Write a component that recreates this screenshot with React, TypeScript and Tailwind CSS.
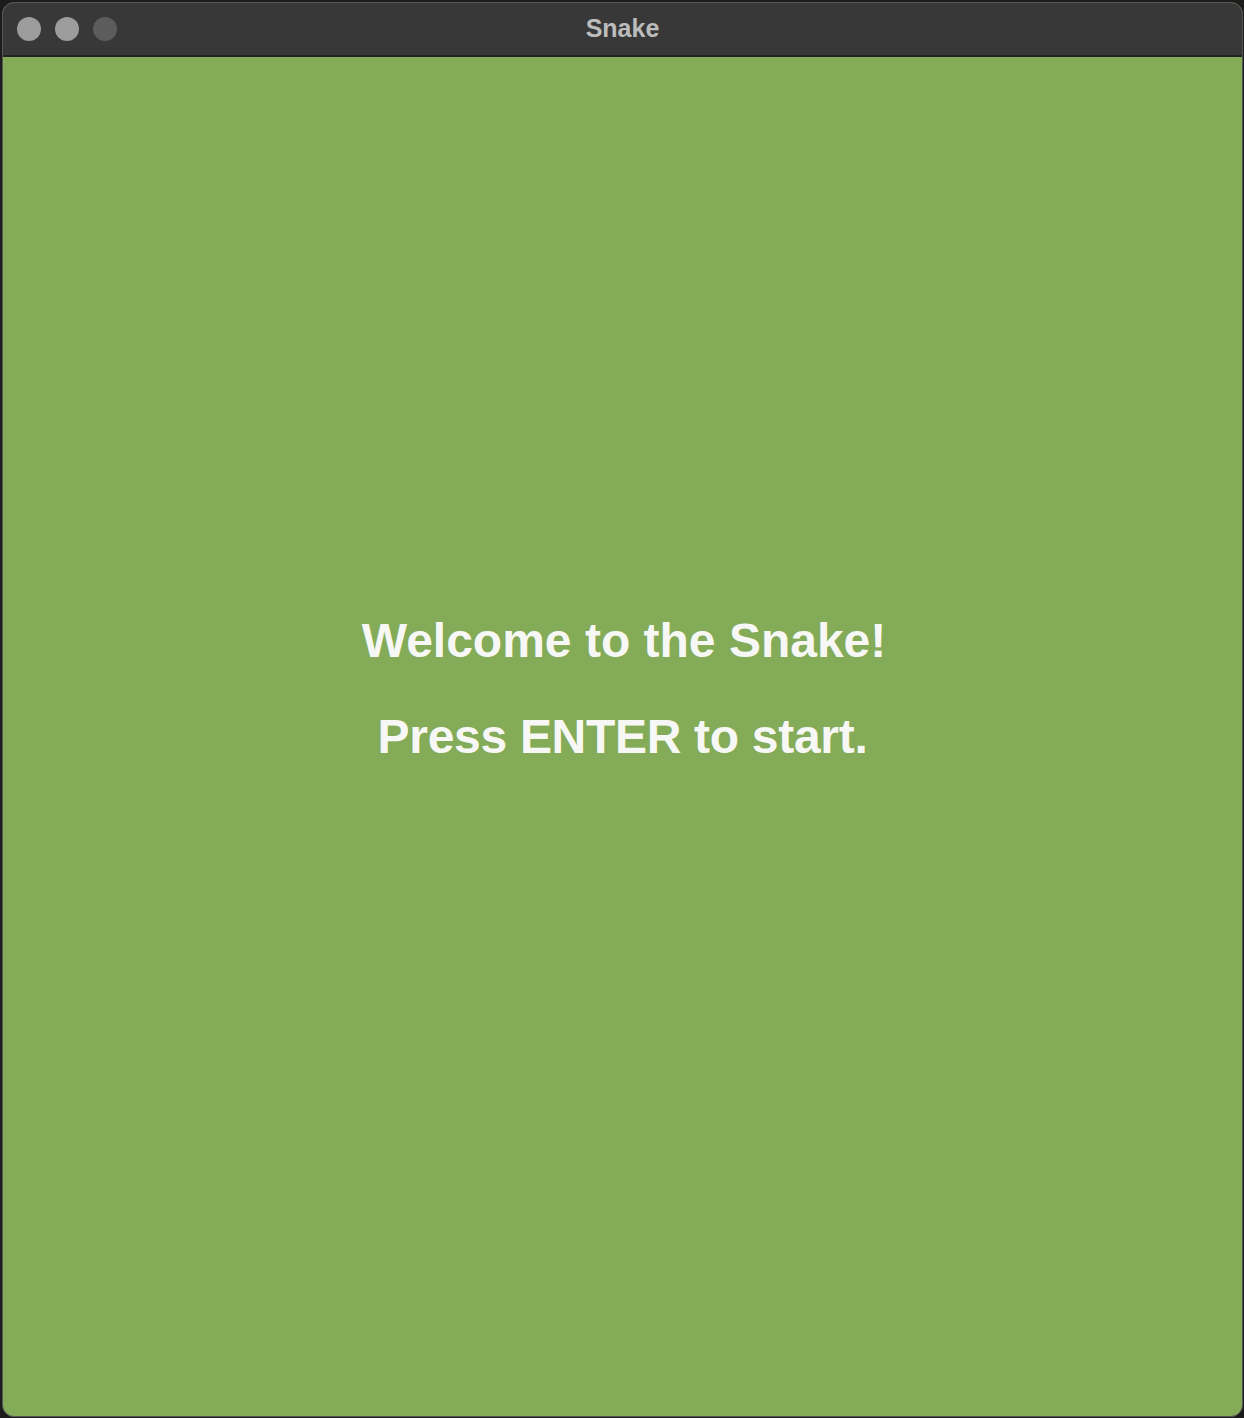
export default function App() {
  return (
    <div className="w-[1244px] h-[1418px] bg-[#1c1c1c] p-[2px] pr-[1px] pb-[1px]">
      <div className="flex h-full w-full flex-col overflow-hidden rounded-[12px] border border-[#555555] bg-[#83ab58]">
        <div className="relative flex h-[54px] shrink-0 items-center justify-center border-b-2 border-[#232323] bg-[#383838]">
          <div className="absolute left-[14px] top-[14px] flex gap-[14px]">
            <div className="h-[24px] w-[24px] rounded-full bg-[#9c9c9c]" />
            <div className="h-[24px] w-[24px] rounded-full bg-[#9c9c9c]" />
            <div className="h-[24px] w-[24px] rounded-full bg-[#5c5c5c]" />
          </div>
          <span
            className="text-[25px] font-bold text-[#bcbcbc]"
            style={{ fontFamily: '"Liberation Sans", Arial, sans-serif' }}
          >
            Snake
          </span>
        </div>
        <div
          className="flex flex-1 flex-col items-center gap-[48px] pt-[560px] text-[48px] font-bold leading-[48px] text-[#f7f7f5]"
          style={{ fontFamily: '"Liberation Sans", Arial, sans-serif' }}
        >
          <div className="pl-[3px]">Welcome to the Snake!</div>
          <div className="tracking-[-0.3px]">Press ENTER to start.</div>
        </div>
      </div>
    </div>
  );
}
